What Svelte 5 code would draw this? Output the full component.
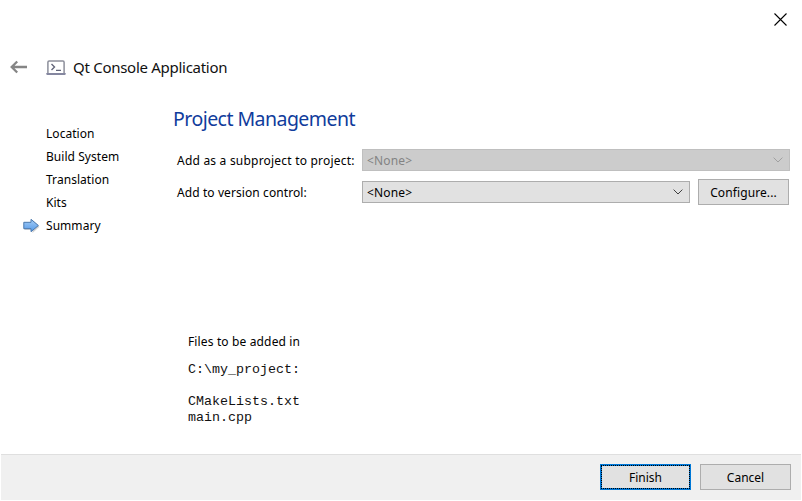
<script>
  const steps = ['Location', 'Build System', 'Translation', 'Kits', 'Summary'];
  const current = 'Summary';
</script>

<div class="wizard">
  <div class="titlebar">
    <svg width="13" height="13" viewBox="0 0 13 13"><path d="M.5 .5l12 12M12.5 .5l-12 12" stroke="#000" stroke-width="1.1" /></svg>
  </div>
  <header>
    <svg class="back" width="18" height="14" viewBox="0 0 18 14" fill="none" stroke="#858585" stroke-width="2.3"><path d="M8.200 1.500L2.700 7l5.500 5.500M3 7h15" /></svg>
    <svg class="console" width="20" height="16" viewBox="0 0 20 16" fill="none">
      <path d="M1.9 13V2.2Q1.9 1 3.1 1H16.9Q18.100 1 18.100 2.200V13" stroke="#8d8f9b" stroke-width="1.5" />
      <path d="M.3 13H19.700V14Q19.700 15 18.700 15H1.300Q.3 15 .3 14z" fill="#8587a0" />
      <path d="M5.500 4l3 3-3 3M10 10.400h5" stroke="#626579" stroke-width="1.400" />
    </svg>
    <span class="apptitle">Qt Console Application</span>
  </header>
  <main>
    <nav>
      {#each steps as step}
        <div class="step">
          <span class="marker">
            {#if step === current}
              <svg width="18" height="16" viewBox="0 0 18 16">
                <defs><linearGradient id="arrow" x1="0" y1="0" x2="0" y2="1"><stop offset="0" stop-color="#a5cdf7" /><stop offset="1" stop-color="#559ae8" /></linearGradient></defs>
                <path d="M1.500 5H9.500V2L16.500 8.700 9.500 15V12H1.500z" fill="#d2d2d2" />
                <path d="M.8 4.300H8V1.300L15.400 7.500 8 13.700V10.700H.8z" fill="url(#arrow)" stroke="#4a78ad" stroke-width="1" />
              </svg>
            {/if}
          </span>
          <span>{step}</span>
        </div>
      {/each}
    </nav>
    <section>
      <h1>Project Management</h1>
      <div class="row first">
        <span class="label a">Add as a subproject to project:</span>
        <div class="combo disabled">
          <span>&lt;None&gt;</span>
          <svg width="10" height="6" viewBox="0 0 10 6" fill="none"><path d="M.6 .6L5 5 9.400 .6" stroke="currentColor" /></svg>
        </div>
      </div>
      <div class="row second">
        <span class="label b">Add to version control:</span>
        <div class="combo">
          <span>&lt;None&gt;</span>
          <svg width="10" height="6" viewBox="0 0 10 6" fill="none"><path d="M.6 .6L5 5 9.400 .6" stroke="currentColor" /></svg>
        </div>
        <button class="configure">Configure...</button>
      </div>
      <div class="files">
        <p>Files to be added in</p>
        <pre>C:\my_project:

CMakeLists.txt
main.cpp</pre>
      </div>
    </section>
  </main>
  <footer>
    <button class="finish"><span>Finish</span></button>
    <button>Cancel</button>
  </footer>
</div>

<style>
  .wizard {
    width: 802px;
    height: 501px;
    box-sizing: border-box;
    padding: 0 1px 1px;
    background: #fff;
    color: #000;
    display: flex;
    flex-direction: column;
    overflow: hidden;
    font: 12px/16px 'Noto Sans', sans-serif;
    white-space: nowrap;
  }
  svg { display: block; flex: none; }
  .titlebar { height: 40px; flex: none; padding: 13px 14px 0 0; box-sizing: border-box; display: flex; justify-content: flex-end; }
  header { height: 55px; flex: none; display: flex; align-items: center; padding-left: 8px; }
  .back { margin-top: -1px; }
  .console { margin-left: 19px; }
  .apptitle { margin-left: 7px; padding-bottom: 2px; font-size: 15px; line-height: 20px; letter-spacing: -0.28px; color: #111; }
  main { flex: 1; display: flex; min-height: 0; }
  nav { width: 172px; flex: none; padding-top: 27px; }
  .step { height: 23px; display: flex; align-items: center; letter-spacing: 0.05px; }
  .marker { width: 45px; padding-left: 22px; box-sizing: border-box; }
  section { flex: 1; display: flex; flex-direction: column; }
  h1 { margin: 11px 0 0; font-size: 19.5px; line-height: 26px; font-weight: 400; color: #103c9c; letter-spacing: -0.54px; }
  .row { height: 26px; display: flex; align-items: center; padding-left: 4px; }
  .first { margin-top: 15px; }
  .second { margin-top: 6px; }
  .label { width: 185px; flex: none; padding-top: 2px; box-sizing: border-box; }
  .a { letter-spacing: 0.21px; }
  .b { letter-spacing: 0.09px; }
  .combo { width: 328px; height: 22px; box-sizing: border-box; border: 1px solid #adadad; background: #e1e1e1; padding: 0 6px 0 4px; display: flex; align-items: center; justify-content: space-between; color: #000; }
  .combo span { padding-top: 2px; letter-spacing: 0.15px; }
  .combo svg { color: #404040; }
  .disabled { width: 428px; background: #ccc; border-color: #bfbfbf; color: #838383; }
  .disabled svg { color: #a0a0a0; }
  button { width: 91px; height: 26px; box-sizing: border-box; border: 1px solid #adadad; border-radius: 0; background: #e1e1e1; color: #000; font: inherit; padding: 2px 0 0; }
  .configure { margin-left: 8px; letter-spacing: 0.1px; }
  .files { margin: 129px 0 0 15px; }
  p { margin: 0; line-height: 16px; letter-spacing: 0.14px; }
  pre { margin: 12px 0 0; font: 13.33px/16px 'Liberation Mono', monospace; color: #111; }
  footer { height: 46px; flex: none; box-sizing: border-box; border-top: 1px solid #dfdfdf; background: #f0f0f0; display: flex; gap: 9px; justify-content: flex-end; padding: 9px 10px 0 0; }
  .finish { border-color: #0078d7; background: #0078d7; padding: 0; }
  .finish span { display: flex; align-items: center; justify-content: center; height: 100%; box-sizing: border-box; border: 1px dotted #000; padding-top: 2px; background: #e1e1e1; background-clip: padding-box; }
</style>
